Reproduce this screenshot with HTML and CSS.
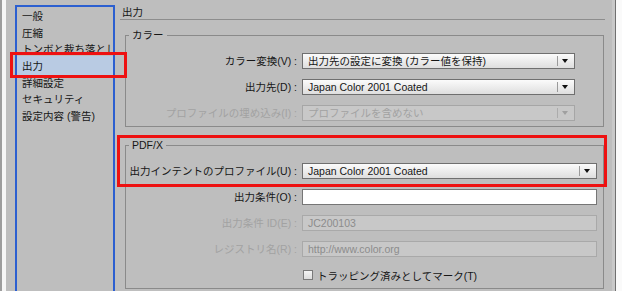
FILE: index.html
```html
<!DOCTYPE html>
<html lang="ja">

<head>
  <meta charset="UTF-8">
  <meta name="viewport" content="width=device-width, initial-scale=1.0">
  <title>PDF 書き出し - 出力</title>
  <link rel="stylesheet" href="styles.css">
</head>

<body>

  <div class="window">
    <div class="edge-left"></div>

    <ul class="sidebar">
      <li>一般</li>
      <li>圧縮</li>
      <li>トンボと裁ち落とし</li>
      <li class="selected">出力</li>
      <li>詳細設定</li>
      <li>セキュリティ</li>
      <li>設定内容 (警告)</li>
    </ul>

    <div class="main">
      <div class="title">出力</div>

      <fieldset class="group group-color">
        <legend>カラー</legend>
        <div class="rows">
          <label>カラー変換(V) :</label>
          <div class="dropdown"><span>出力先の設定に変換 (カラー値を保持)</span><i class="arrow"></i></div>

          <label>出力先(D) :</label>
          <div class="dropdown"><span>Japan Color 2001 Coated</span><i class="arrow"></i></div>

          <label class="disabled">プロファイルの埋め込み(I) :</label>
          <div class="dropdown disabled"><span>プロファイルを含めない</span><i class="arrow"></i></div>
        </div>
      </fieldset>

      <fieldset class="group group-pdfx">
        <legend>PDF/X</legend>
        <div class="rows">
          <label>出力インテントのプロファイル(U) :</label>
          <div class="dropdown"><span>Japan Color 2001 Coated</span><i class="arrow"></i></div>

          <label>出力条件(O) :</label>
          <div class="field"></div>

          <label class="disabled">出力条件 ID(E) :</label>
          <div class="field disabled">JC200103</div>

          <label class="disabled">レジストリ名(R) :</label>
          <div class="field disabled">http://www.color.org</div>

          <div class="check"><i class="box"></i>トラッピング済みとしてマーク(T)</div>
        </div>
      </fieldset>
    </div>

    <div class="edge-right"></div>

    <!-- red annotation frames -->
    <div class="mark mark-nav"></div>
    <div class="mark mark-pdfx"></div>
  </div>

</body>

</html>
```

FILE: styles.css
```css
body {
  margin: 0;
  padding: 0;
  background-color: #bebebe;
  font-family: "Liberation Sans", "Noto Sans CJK JP", sans-serif;
  font-size: 10.5px;
  color: #161616;
  overflow: hidden;
}

.window {
  position: relative;
  display: flex;
  width: 622px;
  height: 291px;
  box-sizing: border-box;
  border-left: 2px solid #9d9d9d;
  overflow: hidden;
}

.edge-left {
  width: 4px;
  background-color: #f6f6f6;
}

.sidebar {
  list-style: none;
  width: 100px;
  height: 300px;
  margin: 5px 0 0 9px;
  padding: 1px 0 0;
  box-sizing: border-box;
  border: 2px solid #2c5fd0;
  border-bottom: none;
  overflow: hidden;
}

.sidebar li {
  height: 16.7px;
  line-height: 16.7px;
  padding-left: 5px;
  white-space: nowrap;
}

.sidebar li.selected {
  margin: -2px 0;
  padding-top: 2px;
  padding-bottom: 2px;
  background-color: #b9cbe3;
}

.main {
  width: 494px;
  margin-left: 3px;
  padding: 0 7px 0 2px;
  box-sizing: border-box;
}

.title {
  height: 20px;
  padding: 5px 0 0 2px;
  box-sizing: border-box;
  line-height: 14px;
  border-bottom: 1px solid #8d8d8d;
}

.group {
  margin: 8px 1px 0 5px;
  padding: 11px 28px 5px 0;
  border: 1px solid #8a8a8a;
}

.group legend {
  margin-left: 3px;
  padding: 0 3px;
  line-height: 14px;
}

.group-pdfx {
  margin-top: 11px;
  padding-right: 6px;
}

.rows {
  display: grid;
  grid-template-columns: 171px 1fr;
  column-gap: 5px;
  row-gap: 10px;
  align-items: center;
}

.rows label {
  text-align: right;
  white-space: nowrap;
  line-height: 16px;
}

.disabled {
  color: #a2a2a2;
}

.dropdown {
  position: relative;
  height: 16px;
  padding-left: 5px;
  box-sizing: border-box;
  border: 1px solid #6f6f6f;
  background: linear-gradient(#fbfbfb, #dedede);
  line-height: 14px;
  white-space: nowrap;
}

.dropdown .arrow {
  position: absolute;
  top: 2px;
  right: 0;
  width: 16px;
  height: 10px;
  border-left: 1px solid #9a9a9a;
}

.dropdown .arrow::after {
  content: "";
  position: absolute;
  top: 3px;
  left: 4px;
  border-left: 3.5px solid transparent;
  border-right: 3.5px solid transparent;
  border-top: 4px solid #111;
}

.dropdown.disabled {
  border-color: #a6a6a6;
  background: #c8c8c8;
}

.dropdown.disabled .arrow {
  border-left-color: #acacac;
}

.dropdown.disabled .arrow::after {
  border-top-color: #a0a0a0;
}

.field {
  height: 16px;
  padding-left: 5px;
  box-sizing: border-box;
  border: 1px solid #767676;
  background-color: #ffffff;
  line-height: 14px;
}

.field.disabled {
  border-color: #a9a9a9;
  background-color: #c8c8c8;
  color: #8c8c8c;
}

.check {
  grid-column: 2;
  display: flex;
  align-items: center;
  gap: 4px;
  height: 16px;
  padding-left: 1px;
}

.check .box {
  width: 10px;
  height: 10px;
  box-sizing: border-box;
  border: 1px solid #7a7a7a;
  background: linear-gradient(#f4f4f4, #dcdcdc);
}

.edge-right {
  width: 10px;
  box-sizing: border-box;
  border-left: 3px solid #c9c9c9;
  box-shadow: inset 1px 0 0 #707070;
  background-color: #fafafa;
}

.mark {
  position: absolute;
  border: 3px solid #ee1111;
  box-sizing: border-box;
}

.mark-nav {
  left: 8px;
  top: 52px;
  width: 117px;
  height: 26px;
}

.mark-pdfx {
  left: 115px;
  top: 135px;
  width: 490px;
  height: 52px;
}
```
